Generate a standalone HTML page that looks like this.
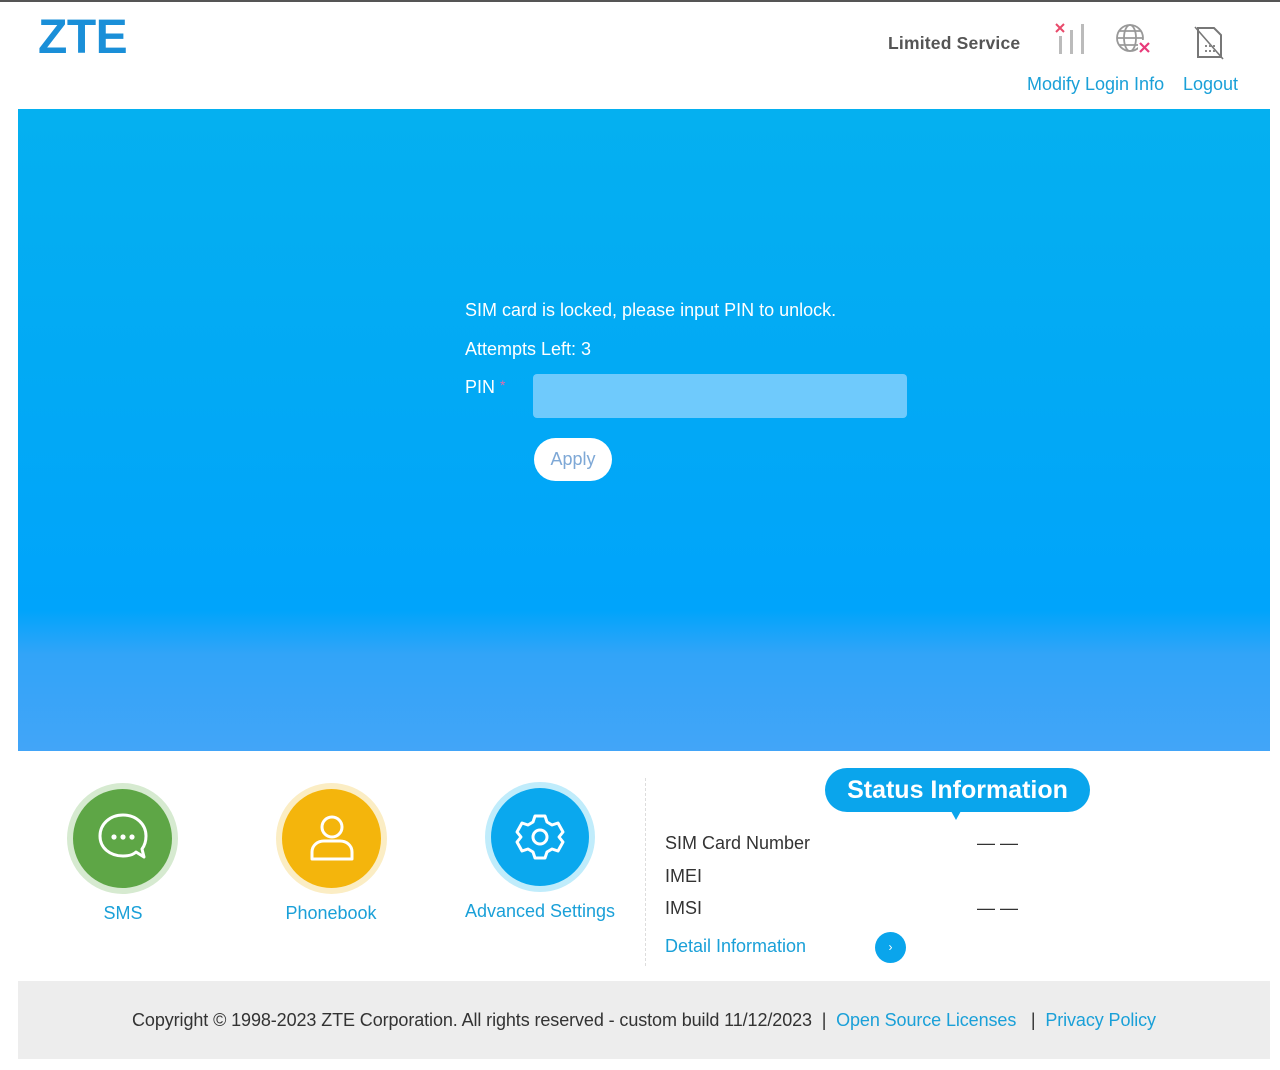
<!DOCTYPE html>
<html><head><meta charset="utf-8">
<style>
*{margin:0;padding:0;box-sizing:border-box}
html,body{width:1280px;height:1070px;background:#fff;font-family:"Liberation Sans",Arial,sans-serif;overflow:hidden;position:relative}
.abs{position:absolute}
.topline{left:0;top:0;width:1280px;height:2px;background:#555}
.logo{left:38px;top:10px;font-size:48px;font-weight:bold;color:#1a8fd8;letter-spacing:-0.5px;font-family:"Liberation Sans",sans-serif}
.ls{left:888px;top:33px;font-size:17.5px;font-weight:bold;color:#555;letter-spacing:0.2px}
.lnk{color:#1aa0d8;font-size:18px}
.panel{left:18px;top:109px;width:1252px;height:642px;background:linear-gradient(#05b0f0 0%,#02a9f5 45%,#00a4fb 78%,#32a4f8 85%,#42a5f8 100%)}
.wt{color:#fff;font-size:18px}
.inp{left:533px;top:374px;width:374px;height:44px;background:#6fcafc;border-radius:4px}
.btn{left:534px;top:438px;width:78px;height:43px;background:#fff;border-radius:22px;color:#7ea8d6;font-size:18px;text-align:center;line-height:43px}
.circ{border-radius:50%}
.lbl{font-size:18px;color:#1aa0d8;text-align:center}
.sep{left:645px;top:778px;height:188px;border-left:1px dashed #ddd}
.si{left:825px;top:768px;width:265px;height:44px;background:#0aa5ec;border-radius:22px;color:#fff;font-size:25px;font-weight:bold;text-align:center;line-height:44px}
.tri{left:951px;top:811px;width:0;height:0;border-left:5px solid transparent;border-right:5px solid transparent;border-top:9px solid #0aa5ec}
.row{left:665px;font-size:18px;color:#333}
.dash{left:977px;font-size:18px;color:#333}
.foot{left:18px;top:981px;width:1252px;height:78px;background:#ededed}
.ft{left:0;width:1288px;top:1010px;text-align:center;font-size:18px;color:#333;letter-spacing:-0.1px}
</style></head><body>
<div class="abs topline"></div>
<div class="abs logo">ZTE</div>
<div class="abs ls">Limited Service</div>
<svg class="abs" style="left:1052px;top:20px" width="40" height="36" viewBox="0 0 40 36">
<path d="M4 4 L12 12 M12 4 L4 12" stroke="#e84a6a" stroke-width="2"/>
<rect x="7" y="16" width="3" height="18" fill="#bbb"/><rect x="18" y="10" width="3" height="24" fill="#bbb"/><rect x="29" y="4" width="3" height="30" fill="#bbb"/>
</svg>
<svg class="abs" style="left:1114px;top:22px" width="40" height="34" viewBox="0 0 40 34">
<g stroke="#999" stroke-width="1.8" fill="none"><circle cx="16" cy="16" r="13"/><ellipse cx="16" cy="16" rx="6" ry="13"/><path d="M3 16 H29 M5 9 H27 M5 23 H27"/></g>
<rect x="24" y="18" width="14" height="14" fill="#fff"/>
<path d="M26 21 L35 30 M35 21 L26 30" stroke="#e83a7a" stroke-width="2.2"/>
</svg>
<svg class="abs" style="left:1193px;top:25px" width="32" height="36" viewBox="0 0 32 36">
<path d="M5 3 H21 L28 10 V32 H5 Z" fill="none" stroke="#777" stroke-width="2"/>
<path d="M2 2 L30 34" stroke="#777" stroke-width="1.6"/>
<g fill="#888"><rect x="12" y="20" width="2" height="2"/><rect x="16" y="20" width="2" height="2"/><rect x="20" y="20" width="2" height="2"/><rect x="12" y="25" width="2" height="2"/><rect x="16" y="25" width="2" height="2"/><rect x="20" y="25" width="2" height="2"/></g>
</svg>
<div class="abs lnk" style="left:1027px;top:74px">Modify Login Info</div>
<div class="abs lnk" style="left:1183px;top:74px">Logout</div>

<div class="abs panel"></div>
<div class="abs wt" style="left:465px;top:300px">SIM card is locked, please input PIN to unlock.</div>
<div class="abs wt" style="left:465px;top:339px">Attempts Left: 3</div>
<div class="abs wt" style="left:465px;top:377px">PIN <span style="color:#e86aa8;font-size:14px;vertical-align:top">*</span></div>
<div class="abs inp"></div>
<div class="abs btn">Apply</div>

<div class="abs circ" style="left:67px;top:783px;width:111px;height:111px;background:#d6ead0"></div>
<div class="abs circ" style="left:73px;top:789px;width:99px;height:99px;background:#5ea646"></div>
<svg class="abs" style="left:96px;top:811px" width="54" height="54" viewBox="0 0 54 54">
<path d="M27 4 C14 4 4 13 4 25 C4 37 14 45 27 45 C32 45 37 44 40 41 L48 46 L46 38 C49 34 50 30 50 25 C50 13 40 4 27 4 Z" fill="none" stroke="#fff" stroke-width="3" stroke-linejoin="round"/>
<circle cx="18" cy="26" r="2.6" fill="#fff"/><circle cx="27" cy="26" r="2.6" fill="#fff"/><circle cx="36" cy="26" r="2.6" fill="#fff"/>
</svg>
<div class="abs lbl" style="left:63px;top:903px;width:120px">SMS</div>

<div class="abs circ" style="left:276px;top:783px;width:111px;height:111px;background:#fbedc4"></div>
<div class="abs circ" style="left:282px;top:789px;width:99px;height:99px;background:#f4b50c"></div>
<svg class="abs" style="left:306px;top:812px" width="52" height="52" viewBox="0 0 52 52">
<g fill="none" stroke="#fff" stroke-width="3"><circle cx="26" cy="15" r="10"/><path d="M6 47 V40 C6 33 12 29 18 29 H34 C40 29 46 33 46 40 V47 Z" stroke-linejoin="round"/></g>
</svg>
<div class="abs lbl" style="left:261px;top:903px;width:140px">Phonebook</div>

<div class="abs circ" style="left:485px;top:782px;width:110px;height:110px;background:#c0ecfb"></div>
<div class="abs circ" style="left:491px;top:788px;width:98px;height:98px;background:#0aa8ee"></div>
<svg class="abs" style="left:514px;top:811px" width="52" height="52" viewBox="0 0 52 52">
<g fill="none" stroke="#fff" stroke-width="3" stroke-linejoin="round">
<path d="M21 5 H31 L33 11 L38 14 L44 12 L49 21 L45 26 L49 31 L44 40 L38 38 L33 41 L31 47 H21 L19 41 L14 38 L8 40 L3 31 L7 26 L3 21 L8 12 L14 14 L19 11 Z"/>
<circle cx="26" cy="26" r="7"/></g>
</svg>
<div class="abs lbl" style="left:455px;top:901px;width:170px">Advanced Settings</div>

<div class="abs sep"></div>
<div class="abs si">Status Information</div>
<div class="abs tri"></div>
<div class="abs row" style="top:833px">SIM Card Number</div>
<div class="abs dash" style="top:833px">— —</div>
<div class="abs row" style="top:866px">IMEI</div>
<div class="abs row" style="top:898px">IMSI</div>
<div class="abs dash" style="top:898px">— —</div>
<div class="abs row" style="top:936px;color:#1aa0d8">Detail Information</div>
<div class="abs circ" style="left:875px;top:932px;width:31px;height:31px;background:#0aa5ec;color:#fff;font-size:12px;text-align:center;line-height:31px">›</div>

<div class="abs foot"></div>
<div class="abs ft">Copyright © 1998-2023 ZTE Corporation. All rights reserved - custom build 11/12/2023 &nbsp;| &nbsp;<span style="color:#1aa0d8">Open Source Licenses</span> &nbsp; | &nbsp;<span style="color:#1aa0d8">Privacy Policy</span></div>
</body></html>
